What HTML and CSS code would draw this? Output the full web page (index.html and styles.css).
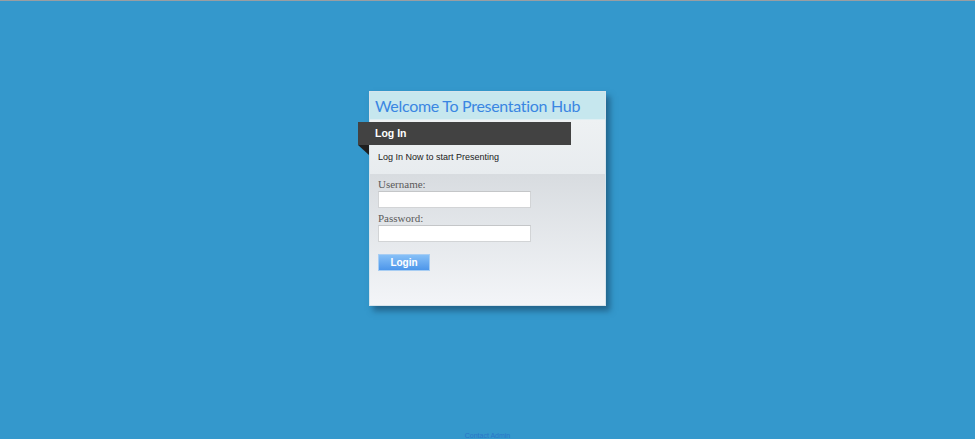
FILE: index.html
```html
<!DOCTYPE html>
<html>
<head>
<meta charset="utf-8">
<link rel="stylesheet" href="styles.css">
</head>
<body>
<div class="page">
  <div class="card">
    <div class="card-head">Welcome To Presentation Hub</div>
    <div class="card-top">
      <div class="ribbon"><span>Log In</span></div>
      <p class="intro">Log In Now to start Presenting</p>
    </div>
    <form class="card-form">
      <label class="lbl">Username:</label>
      <input class="field" type="text">
      <label class="lbl">Password:</label>
      <input class="field" type="password">
      <button class="btn" type="button">Login</button>
    </form>
  </div>
  <a class="contact" href="#">Contact Admin</a>
</div>
</body>
</html>
```
FILE: styles.css
```css
html, body {
  margin: 0;
  padding: 0;
  height: 100%;
}
body {
  background: #3498cc;
  border-top: 1px solid #9a9ea2;
  box-sizing: border-box;
  overflow: hidden;
  font-family: "Liberation Sans", Arial, sans-serif;
}
.page {
  display: flex;
  flex-direction: column;
  align-items: center;
  padding-top: 90px;
}
.card {
  width: 235px;
  height: 213px;
  border: 1px solid #d6e4ec;
  background: linear-gradient(#eaeef1, #e6eaee);
  box-shadow: 4px 5px 6px rgba(20, 60, 90, 0.55);
  display: flex;
  flex-direction: column;
}
.card-head {
  height: 27px;
  background: #c6e7ee;
  border-bottom: 1px solid #dfeff3;
  color: #3a86e2;
  font-family: Lato, "Liberation Sans", sans-serif;
  font-size: 16px;
  letter-spacing: -0.3px;
  line-height: 27px;
  padding-left: 5px;
}
.card-top {
  height: 52px;
  padding-top: 2px;
  background: linear-gradient(#eef1f3, #e8ecef);
}
.ribbon {
  position: relative;
  margin-left: -12px;
  width: 213px;
  height: 23px;
  background: #424242;
  color: #fff;
  font-weight: bold;
  font-size: 10.5px;
  line-height: 23px;
  box-sizing: border-box;
  padding-left: 17px;
}
.ribbon::after {
  content: "";
  position: absolute;
  left: 0;
  top: 23px;
  border-top: 10px solid #1f1f1f;
  border-left: 11px solid transparent;
}
.intro {
  margin: 6px 0 0 8px;
  font-size: 9px;
  line-height: 12px;
  color: #1a1a1a;
}
.card-form {
  flex: 1;
  margin: 0;
  padding: 5px 0 0 8px;
  background: linear-gradient(#d8dce0, #f3f5f8);
  display: flex;
  flex-direction: column;
  align-items: flex-start;
}
.lbl {
  font-family: "Liberation Serif", "Times New Roman", serif;
  font-size: 11px;
  color: #5a5a5a;
  line-height: 11px;
}
.field {
  width: 153px;
  height: 17px;
  box-sizing: border-box;
  margin: 1px 0 5px 0;
  border: 1px solid #d2d4d6;
  border-top-color: #c4c6c8;
  background: #fff;
  padding: 0;
}
.btn {
  margin-top: 7px;
  width: 52px;
  height: 17px;
  padding: 0;
  border: 1px solid #a7cdf3;
  background: linear-gradient(#86c0f7, #4d96ea);
  color: #fff;
  font-family: "Liberation Sans", Arial, sans-serif;
  font-weight: bold;
  font-size: 10px;
  line-height: 15px;
}
.contact {
  margin-top: 126px;
  font-size: 7px;
  color: #2a76c8;
  text-decoration: none;
}
```
